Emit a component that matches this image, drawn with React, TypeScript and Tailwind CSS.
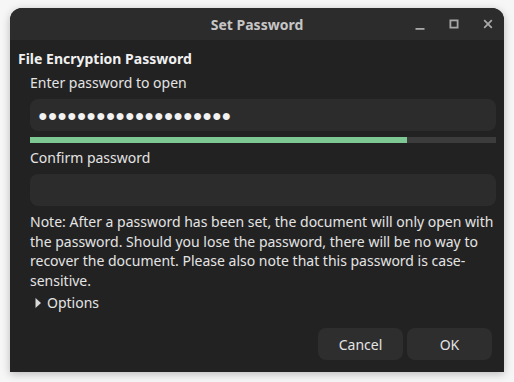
import React from 'react';

function TitleButtons() {
  return (
    <div className="absolute right-0 top-0 h-full flex items-center gap-[16px] pr-[7px] text-[#a8a8a8]">
      <svg width="18" height="18" viewBox="0 0 18 18">
        <rect x="4.5" y="13" width="9" height="1.8" fill="currentColor" />
      </svg>
      <svg width="18" height="18" viewBox="0 0 18 18">
        <rect x="5.4" y="5.4" width="7.2" height="7.2" fill="none" stroke="currentColor" strokeWidth="1.8" />
      </svg>
      <svg width="18" height="18" viewBox="0 0 18 18">
        <path d="M5.2 5.2 L12.8 12.8 M12.8 5.2 L5.2 12.8" stroke="currentColor" strokeWidth="1.8" />
      </svg>
    </div>
  );
}

export default function App() {
  const dots = '●'.repeat(20);
  return (
    <div
      className="w-[514px] h-[382px] bg-[#f6f6f6] pt-[8px] px-[10px]"
      style={{ fontFamily: '"Noto Sans", "Open Sans", sans-serif' }}
    >
      <div className="w-[494px] h-[364px] flex flex-col bg-[#222222] rounded-t-[12px] shadow-[0_2px_8px_rgba(0,0,0,0.25)] overflow-hidden">
        {/* Title bar */}
        <div className="relative h-[32px] shrink-0 bg-[#2c2c2c] flex items-center justify-center">
          <span className="text-[14px] font-bold text-[#c6c6c6]">Set Password</span>
          <TitleButtons />
        </div>

        {/* Content */}
        <div className="flex-1 flex flex-col pl-[8px] pr-[8px] pt-[9px]">
          <div className="text-[14px] font-bold text-[#f0f0f0] leading-[20px]">File Encryption Password</div>
          <div className="pl-[12px] flex flex-col">
            <div className="text-[14px] text-[#e4e4e4] leading-[20px] mt-[4px]">Enter password to open</div>
            <div className="mt-[6px] h-[32px] rounded-[8px] bg-[#2c2c2c] flex items-center px-[8px] text-[#f2f2f2] text-[16px] tracking-[0px]">
              {dots}
            </div>
            <div className="mt-[6px] h-[6px] bg-[#3c3c3c] flex">
              <div className="h-full bg-[#7ec894]" style={{ width: '81%' }} />
            </div>
            <div className="text-[14px] text-[#e4e4e4] leading-[20px] mt-[5px]">Confirm password</div>
            <div className="mt-[6px] h-[32px] rounded-[8px] bg-[#2c2c2c]" />
            <p className="mt-[6px] text-[14px] text-[#e4e4e4] leading-[19.5px]">
              Note: After a password has been set, the document will only open with the password. Should you lose the
              password, there will be no way to recover the document. Please also note that this password is
              case-sensitive.
            </p>
            <div className="mt-[3px] flex items-center gap-[5px] text-[14px] text-[#e4e4e4] leading-[20px]">
              <svg width="8" height="12" viewBox="0 0 8 12" className="ml-[4px]">
                <path d="M1.5 1 L7 6 L1.5 11 Z" fill="#d8d8d8" />
              </svg>
              <span>Options</span>
            </div>
          </div>
          <div className="mt-auto mb-[12px] flex justify-end gap-[4px] pr-[4px]">
            <button className="w-[85px] h-[32px] rounded-[8px] bg-[#2e2e2e] text-[14px] text-[#e4e4e4]">Cancel</button>
            <button className="w-[85px] h-[32px] rounded-[8px] bg-[#2e2e2e] text-[14px] text-[#e4e4e4]">OK</button>
          </div>
        </div>
      </div>
    </div>
  );
}
